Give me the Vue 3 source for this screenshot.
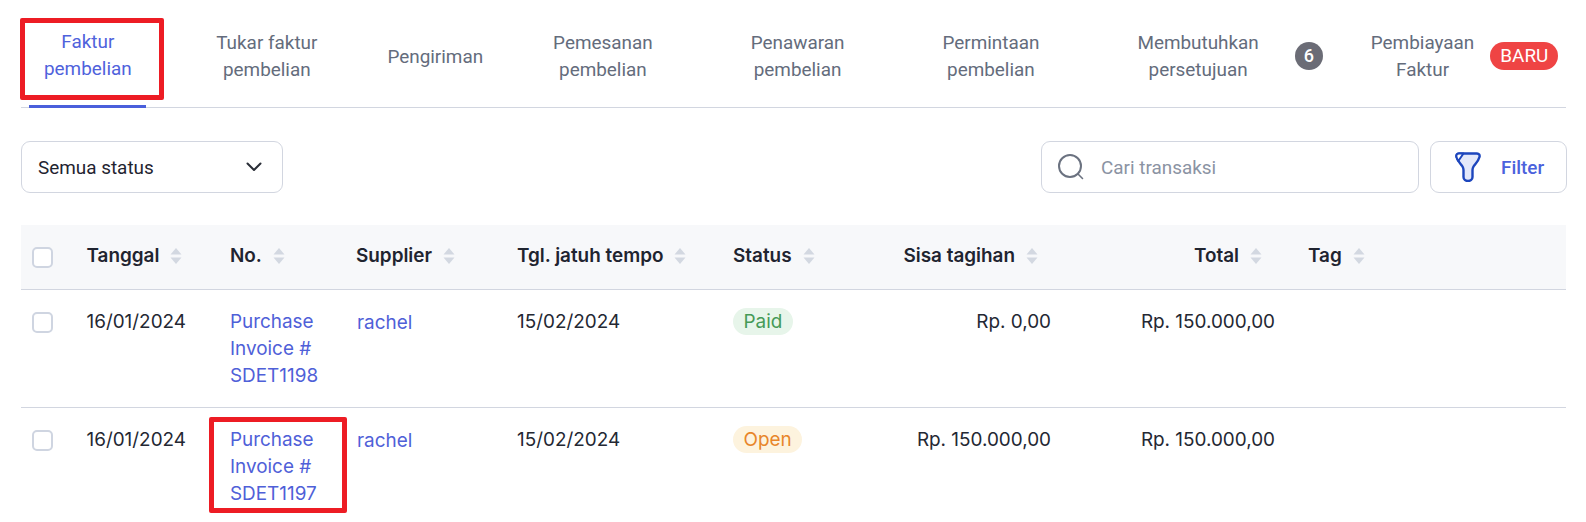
<script setup>
const tabs = [
  { label: ['Faktur', 'pembelian'], active: true },
  { label: ['Tukar faktur', 'pembelian'] },
  { label: ['Pengiriman'] },
  { label: ['Pemesanan', 'pembelian'] },
  { label: ['Penawaran', 'pembelian'], wide: true },
  { label: ['Permintaan', 'pembelian'], wide: true },
  { label: ['Membutuhkan', 'persetujuan'], wide: true, count: '6' },
  { label: ['Pembiayaan', 'Faktur'], near: true, fresh: 'BARU' }
]
const cols = [
  { label: 'Tanggal' },
  { label: 'No.' },
  { label: 'Supplier' },
  { label: 'Tgl. jatuh tempo' },
  { label: 'Status' },
  { label: 'Sisa tagihan', right: true },
  { label: 'Total', right: true },
  { label: 'Tag', tag: true }
]
const rows = [
  { date: '16/01/2024', no: 'SDET1198', due: '15/02/2024', status: 'Paid', rest: 'Rp. 0,00', total: 'Rp. 150.000,00' },
  { date: '16/01/2024', no: 'SDET1197', due: '15/02/2024', status: 'Open', rest: 'Rp. 150.000,00', total: 'Rp. 150.000,00' }
]
</script>

<template>
  <div class="page">
    <nav class="tabs">
      <div
        v-for="(t, i) in tabs"
        :key="i"
        class="tab"
        :class="{ active: t.active, wide: t.wide, near: t.near }"
      >
        <span class="tab-label"><span v-for="l in t.label" :key="l" class="line">{{ l }}</span></span>
        <span v-if="t.count" class="count">{{ t.count }}</span>
        <span v-if="t.fresh" class="fresh">{{ t.fresh }}</span>
      </div>
    </nav>

    <div class="toolbar">
      <div class="select">
        <span>Semua status</span>
        <svg width="20" height="20" viewBox="0 0 20 20" fill="none"><path d="M3.500 6.500 10 13l6.500-6.500" stroke="#2a2e37" stroke-width="2" stroke-linecap="round" stroke-linejoin="round"/></svg>
      </div>
      <div class="spacer"></div>
      <div class="search">
        <svg width="30" height="30" viewBox="0 0 30 30" fill="none"><circle cx="14" cy="14" r="11" stroke="#6b7280" stroke-width="2"/><path d="M22.500 22.500l4 4" stroke="#6b7280" stroke-width="1.600" stroke-linecap="round"/></svg>
        <span>Cari transaksi</span>
      </div>
      <div class="filter">
        <svg width="26" height="30" viewBox="0 0 26 30" fill="none"><path d="M4 1.500H22C24 1.500 25 3 24.500 5C23.500 9 20 12 18.500 14.500C18 15.500 17.500 16.500 17.500 18V25C17.500 27.500 15.500 29 13 29C10.500 29 8.500 27.500 8.500 25V18C8.500 16.500 8 15.500 7.500 14.500C6 12 2.500 9 1.500 5C1 3 2 1.500 4 1.500Z" fill="#e3e8fa" stroke="#1d46bd" stroke-width="2.400" stroke-linejoin="round"/><path d="M8.500 1.500H4C2 1.500 1 3 1.500 5C1.800 6.500 2.500 7.800 3.300 9Z" fill="#fff" stroke="#1d46bd" stroke-width="2" stroke-linejoin="round"/></svg>
        <span>Filter</span>
      </div>
    </div>

    <table class="grid">
      <colgroup>
        <col class="c-check" />
        <col class="c-date" />
        <col class="c-no" />
        <col class="c-supplier" />
        <col class="c-due" />
        <col class="c-status" />
        <col class="c-rest" />
        <col class="c-total" />
        <col />
      </colgroup>
      <thead>
        <tr>
          <th class="check-cell"><span class="check"></span></th>
          <th v-for="c in cols" :key="c.label" :class="{ right: c.right, tagcol: c.tag }">
            <span class="th-in">
              {{ c.label }}
              <svg class="sort" width="12" height="18" viewBox="0 0 12 18"><path d="M6 1l5.500 6.500H.5Z" fill="#d3d8e1"/><path d="M6 17 .5 10.500h11Z" fill="#d3d8e1"/></svg>
            </span>
          </th>
        </tr>
      </thead>
      <tbody>
        <tr v-for="r in rows" :key="r.no">
          <td class="check-cell"><span class="check"></span></td>
          <td>{{ r.date }}</td>
          <td class="link">Purchase Invoice #<br />{{ r.no }}</td>
          <td class="link"><span class="supplier">rachel</span></td>
          <td>{{ r.due }}</td>
          <td><span class="pill" :class="r.status.toLowerCase()">{{ r.status }}</span></td>
          <td class="num">{{ r.rest }}</td>
          <td class="num">{{ r.total }}</td>
          <td></td>
        </tr>
      </tbody>
    </table>

    <div class="mark mark-tab"></div>
    <div class="mark mark-row"></div>
  </div>
</template>

<style>
html, body { margin: 0; background: #fff; overflow: hidden; }
</style>

<style scoped>
.page {
  position: relative;
  box-sizing: border-box;
  width: 1586px;
  height: 522px;
  overflow: hidden;
  padding: 0 20px 0 21px;
  font-family: Roboto, sans-serif;
  font-size: 18.9px;
  line-height: 27px;
  color: #1f2430;
}
.tabs {
  display: flex;
  align-items: stretch;
  height: 107px;
  padding-left: 8px;
  border-bottom: 1px solid #d2d6e0;
}
.tab {
  display: flex;
  align-items: center;
  height: 108px;
  box-sizing: border-box;
  padding: 31px 15px 24px;
  margin-left: 40px;
  border-bottom: 3px solid transparent;
  color: #646c7c;
  text-align: center;
}
.tab:first-child { margin-left: 0; padding: 29px 14.5px 24px 15px; }
.tab:nth-child(2) { margin-left: 55px; }
.tab.wide { margin-left: 68px; }
.tab.near { margin-left: 18px; }
.tab.active {
  color: #4f62dc;
  border-bottom-color: #4a5fdb;
}
.tab-label { display: block; }
.line { display: block; white-space: nowrap; }
.count {
  width: 28px;
  height: 28px;
  margin-left: 36px;
  border-radius: 50%;
  background: #6b6c76;
  color: #fff;
  font-size: 18px;
  font-weight: 500;
  line-height: 28px;
  text-align: center;
}
.fresh {
  height: 28px;
  margin-left: 16px;
  padding: 0 10px;
  border-radius: 14px;
  background: #ef4444;
  color: #fff;
  line-height: 28px;
}
.toolbar {
  display: flex;
  gap: 11px;
  margin: 33px -1px 0 0;
}
.spacer { flex: 1; }
.select, .search, .filter {
  box-sizing: border-box;
  display: flex;
  align-items: center;
  height: 52px;
  border: 1px solid #d2d6e0;
  border-radius: 9px;
  background: #fff;
}
.select {
  width: 262px;
  padding: 0 18px 0 16px;
  justify-content: space-between;
}
.search {
  width: 378px;
  padding-left: 14px;
  gap: 15px;
  color: #8b93a3;
}
.filter {
  width: 137px;
  padding-left: 24px;
  gap: 20px;
  color: #4b62dd;
  font-weight: 500;
}
.grid {
  width: 1545px;
  margin-top: 32px;
  border-collapse: separate;
  border-spacing: 0;
  table-layout: fixed;
  font-family: Inter, sans-serif;
  font-size: 18.9px;
  line-height: 27px;
}
.c-check { width: 53.5px; }
.c-date { width: 143.5px; }
.c-no { width: 126px; }
.c-supplier { width: 161px; }
.c-due { width: 216px; }
.c-status { width: 149px; }
.c-rest { width: 193px; }
.c-total { width: 224px; }
th {
  height: 61px;
  padding: 0 12px 3px;
  background: #f7f8fa;
  border-bottom: 1px solid #d2d6e0;
  text-align: left;
  font-weight: 600;
  color: #1f2430;
  white-space: nowrap;
}
th.right { text-align: right; padding-right: 25px; }
th.tagcol { padding-left: 21px; }
.th-in { display: inline-flex; align-items: center; gap: 11px; }
td {
  padding: 18px 12px;
  border-bottom: 1px solid #d2d6e0;
  vertical-align: top;
  color: #242833;
}
.check-cell { padding-left: 11px; padding-right: 0; }
.check {
  display: block;
  box-sizing: border-box;
  width: 21px;
  height: 21px;
  border: 2px solid #cfd5e1;
  border-radius: 5px;
  background: #fff;
}
th.check-cell { padding-bottom: 0; }
td.check-cell { padding-top: 22px; }
.link { color: #4f60d8; }
.supplier { position: relative; top: 1px; left: 1px; }
.num { text-align: right; }
.pill {
  display: inline-block;
  padding: 0 10.500px;
  border-radius: 14px;
}
.paid { background: #e7f5ea; color: #459a57; }
.open { background: #fdf3de; color: #e8862a; }
.mark {
  position: absolute;
  box-sizing: border-box;
  border: 5px solid #ed1c24;
  border-radius: 2px;
}
.mark-tab { left: 20px; top: 18px; width: 144px; height: 82px; }
.mark-row { left: 209px; top: 417px; width: 138px; height: 96px; }
</style>
